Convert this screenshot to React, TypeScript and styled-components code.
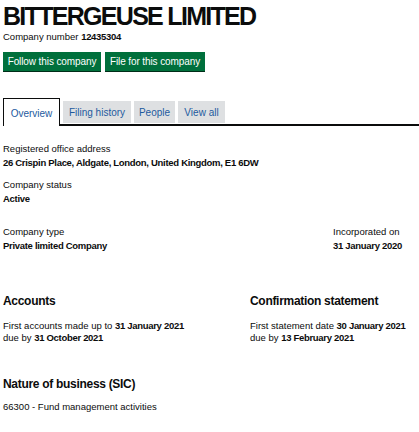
import React from "react";
import styled, { createGlobalStyle } from "styled-components";

const Global = createGlobalStyle`
  html, body { margin: 0; padding: 0; background: #ffffff; }
  body { font-family: "Liberation Sans", Arial, sans-serif; color: #0b0c0c; }
  * { box-sizing: border-box; }
  strong { font-weight: 700; letter-spacing: -0.3px; }
`;

const Page = styled.main`
  padding: 0 3px;
  width: 419px;
`;

const Title = styled.h1`
  margin: 0;
  padding-top: 2px;
  font-size: 25px;
  line-height: 28px;
  font-weight: 700;
  letter-spacing: -1.7px;
`;

const CompanyNumber = styled.p`
  margin: 0;
  font-size: 9.5px;
  line-height: 14px;
`;

const ButtonRow = styled.div`
  display: flex;
  gap: 4px;
  margin-top: 8px;
`;

const Button = styled.a<{ $w: number }>`
  display: flex;
  align-items: center;
  justify-content: center;
  width: ${(p) => p.$w}px;
  height: 19px;
  background: #00703c;
  color: #ffffff;
  font-size: 10px;
  letter-spacing: -0.1px;
  box-shadow: 0 1px 0 #002d18;
  text-decoration: none;
`;

const TabList = styled.ul`
  list-style: none;
  margin: 27px -3px 0 0;
  padding: 0;
  display: flex;
  align-items: flex-end;
  gap: 3px;
  height: 28px;
  position: relative;
  &::after {
    content: "";
    position: absolute;
    left: 57px;
    right: 0;
    bottom: 0;
    height: 2px;
    background: #0b0c0c;
  }
`;

const Tab = styled.li<{ $active?: boolean; $w: number }>`
  width: ${(p) => p.$w}px;
  display: flex;
  align-items: center;
  justify-content: center;
  font-size: 10px;
  color: #1d5a9e;
  ${(p) =>
    p.$active
      ? `height: 28px; border: 1px solid #0b0c0c; border-bottom: none; background: #fff; padding-top: 1px;`
      : `height: 22px; margin-bottom: 3px; background: #dee0e2;`}
`;

const Details = styled.dl`
  margin: 16px 0 0 0;
  font-size: 9.5px;
`;

const Label = styled.dt`
  line-height: 14px;
`;

const Value = styled.dd`
  margin: 0;
  font-weight: 700;
  letter-spacing: -0.3px;
  line-height: 14px;
`;

const Group = styled.div<{ $gap?: number }>`
  margin-top: ${(p) => p.$gap ?? 0}px;
`;

const SplitRow = styled.div`
  display: grid;
  grid-template-columns: 330px 1fr;
  margin-top: 19px;
`;

const Columns = styled.div`
  display: grid;
  grid-template-columns: 247px 1fr;
  margin-top: 40px;
`;

const Heading = styled.h2`
  margin: 0;
  font-size: 12px;
  line-height: 16px;
  font-weight: 700;
  letter-spacing: -0.3px;
`;

const Lines = styled.p`
  margin: 11px 0 0 0;
  font-size: 9.5px;
  line-height: 12px;
  white-space: nowrap;
`;

const SicSection = styled.section`
  margin-top: 32px;
`;

const SicLine = styled.p`
  margin: 9px 0 0 0;
  font-size: 9.5px;
  line-height: 12px;
`;

export default function App() {
  return (
    <>
      <Global />
      <Page>
        <Title>BITTERGEUSE LIMITED</Title>
        <CompanyNumber>
          Company number <strong>12435304</strong>
        </CompanyNumber>
        <ButtonRow>
          <Button $w={98}>Follow this company</Button>
          <Button $w={100}>File for this company</Button>
        </ButtonRow>
        <TabList>
          <Tab $active $w={57}>Overview</Tab>
          <Tab $w={68}>Filing history</Tab>
          <Tab $w={41}>People</Tab>
          <Tab $w={47}>View all</Tab>
        </TabList>
        <Details>
          <Group>
            <Label>Registered office address</Label>
            <Value>26 Crispin Place, Aldgate, London, United Kingdom, E1 6DW</Value>
          </Group>
          <Group $gap={8}>
            <Label>Company status</Label>
            <Value>Active</Value>
          </Group>
          <SplitRow>
            <div>
              <Label>Company type</Label>
              <Value>Private limited Company</Value>
            </div>
            <div>
              <Label>Incorporated on</Label>
              <Value>31 January 2020</Value>
            </div>
          </SplitRow>
        </Details>
        <Columns>
          <section>
            <Heading>Accounts</Heading>
            <Lines>
              First accounts made up to <strong>31 January 2021</strong>
              <br />
              due by <strong>31 October 2021</strong>
            </Lines>
          </section>
          <section>
            <Heading>Confirmation statement</Heading>
            <Lines>
              First statement date <strong>30 January 2021</strong>
              <br />
              due by <strong>13 February 2021</strong>
            </Lines>
          </section>
        </Columns>
        <SicSection>
          <Heading>Nature of business (SIC)</Heading>
          <SicLine>66300 - Fund management activities</SicLine>
        </SicSection>
      </Page>
    </>
  );
}
